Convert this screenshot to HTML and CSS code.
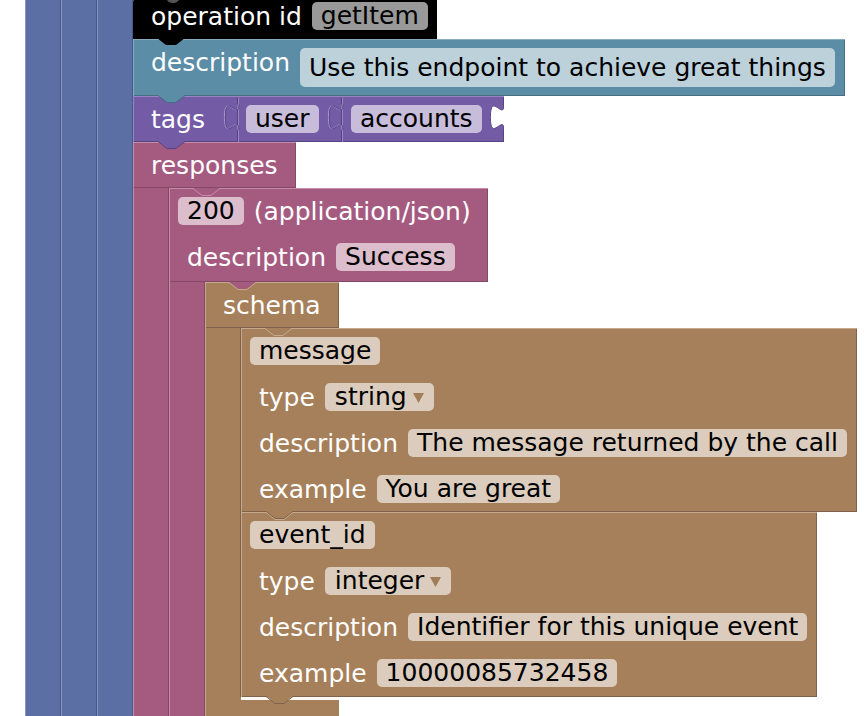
FILE: index.html
```html
<!DOCTYPE html>
<html>
<head>
<meta charset="utf-8">
<link rel="stylesheet" href="styles.css">
</head>
<body>
<div class="ws">
 <div class="cb blue"><div class="arm"></div>
  <div class="cb blue"><div class="arm"></div>
   <div class="cb blue"><div class="arm"></div>
    <div class="stack top">

     <div class="blk black line op">
      <span class="dot"></span>
      <span class="lbl">operation id</span><span class="pill">getItem</span>
      <svg class="tab" width="28" height="8" viewBox="0 0 28 8"><path class="f" d="M0 0H28L19 7H9Z"/></svg>
     </div>

     <div class="blk teal line desc">
      <span class="lbl">description</span><span class="pill tall">Use this endpoint to achieve great things</span>
      <svg class="tab" width="28" height="9" viewBox="0 0 28 9"><path class="f" d="M0 0H27L18 7H9Z"/><path class="d" d="M0 0.5L9 7.5H18L27 0.5"/></svg>
     </div>

     <div class="tagsrow">
      <div class="blk purple line tagsb">
       <span class="lbl">tags</span>
       <svg class="tab" width="28" height="9" viewBox="0 0 28 9"><path class="f" d="M0 0H27L18 7H9Z"/><path class="d" d="M0 0.5L9 7.5H18L27 0.5"/></svg>
      </div>
      <div class="blk purple line val userb">
       <svg class="puz" width="16" height="46" viewBox="0 0 16 46"><path class="pl" d="M15 8.5c0 17 -13.6 -13.6 -13.6 12.75s13.6 -4.25 13.6 12.75"/><path class="pd" d="M16 8.5c0 17 -13.6 -13.6 -13.6 12.75s13.6 -4.25 13.6 12.75"/></svg>
       <span class="pill">user</span>
      </div>
      <div class="blk purple line val acctb">
       <svg class="puz" width="16" height="46" viewBox="0 0 16 46"><path class="pl" d="M15 8.5c0 17 -13.6 -13.6 -13.6 12.75s13.6 -4.25 13.6 12.75"/><path class="pd" d="M16 8.5c0 17 -13.6 -13.6 -13.6 12.75s13.6 -4.25 13.6 12.75"/></svg>
       <span class="pill">accounts</span>
       <svg class="hole" width="16" height="46" viewBox="0 0 16 46"><path class="hw" d="M16 8.5c0 17 -13.6 -13.6 -13.6 12.75s13.6 -4.25 13.6 12.75Z"/><path class="pd" d="M16 8.5c0 17 -13.6 -13.6 -13.6 12.75s13.6 -4.25 13.6 12.75"/></svg>
      </div>
     </div>

     <div class="cblk pink responses">
      <div class="blk line head resp-head"><span class="lbl">responses</span></div>
      <div class="cb">
       <div class="arm"></div>
       <div class="stack">

        <div class="cblk pink r200">
         <div class="blk head r200-head">
          <svg class="notch" width="28" height="9" viewBox="0 0 28 9"><path class="f" d="M0 0H27L18 7H9Z"/><path class="l" d="M0 0.5L9 7.5H18L27 0.5"/></svg>
          <div class="row pf"><span class="pill">200</span><span class="lbl">(application/json)</span></div>
          <div class="row"><span class="lbl">description</span><span class="pill">Success</span></div>
         </div>
         <div class="cb">
          <div class="arm"></div>
          <div class="stack">

           <div class="cblk brown schema">
            <div class="blk line head schema-head">
             <svg class="notch" width="28" height="9" viewBox="0 0 28 9"><path class="fp" d="M0 0H27L18 7H9Z"/><path class="l" d="M0 0.5L9 7.5H18L27 0.5"/></svg>
             <span class="lbl">schema</span>
            </div>
            <div class="cb">
             <div class="arm"></div>
             <div class="stack">

              <div class="blk prop msg">
               <svg class="notch" width="28" height="9" viewBox="0 0 28 9"><path class="f" d="M0 0H27L18 7H9Z"/><path class="l" d="M0 0.5L9 7.5H18L27 0.5"/></svg>
               <div class="row pf"><span class="pill">message</span></div>
               <div class="row"><span class="lbl">type</span><span class="pill dd">string<svg class="arr" width="11" height="10" viewBox="0 0 11 10"><path d="M0 0H11L5.5 10Z"/></svg></span></div>
               <div class="row"><span class="lbl">description</span><span class="pill">The message returned by the call</span></div>
               <div class="row"><span class="lbl">example</span><span class="pill">You are great</span></div>
               <svg class="tab" width="28" height="10" viewBox="0 0 28 10"><path class="f" d="M0 0H27L18 7H9Z"/><path class="d" d="M0 0.5L9 7.5H18L27 0.5"/><path class="l" d="M0 1.5L9 8.5H18L27 1.5"/></svg>
              </div>

              <div class="blk prop evt">
               <div class="row pf"><span class="pill">event_id</span></div>
               <div class="row"><span class="lbl">type</span><span class="pill dd">integer<svg class="arr" width="11" height="10" viewBox="0 0 11 10"><path d="M0 0H11L5.5 10Z"/></svg></span></div>
               <div class="row"><span class="lbl">description</span><span class="pill">Identifier for this unique event</span></div>
               <div class="row"><span class="lbl">example</span><span class="pill">10000085732458</span></div>
               <svg class="tab" width="28" height="9" viewBox="0 0 28 9"><path class="f" d="M0 0H27L18 7H9Z"/><path class="d" d="M0 0.5L9 7.5H18L27 0.5"/></svg>
              </div>

             </div>
            </div>
            <div class="foot"></div>
           </div>

          </div>
         </div>
        </div>

       </div>
      </div>
     </div>

    </div>
   </div>
  </div>
 </div>
</div>
</body>
</html>
```

FILE: styles.css
```css
* { box-sizing: border-box; }
html, body { margin: 0; padding: 0; background: #fff; }
body {
  font-family: "DejaVu Sans", "Noto Sans", sans-serif;
  font-size: 25px;
  color: #fff;
}

.ws {
  height: 716px;
  overflow: hidden;
  padding-left: 25px;
  background: #fff;
}

/* palette */
.blue   { --c: #5b6fa5; --lt: #8797c3; --dk: #46578a; }
.black  { --c: #000000; --lt: #000000; --dk: #000000; }
.teal   { --c: #5b8da6; --lt: #86abbe; --dk: #466f84; }
.purple { --c: #745ba6; --lt: #9985c2; --dk: #574383; }
.pink   { --c: #a55b80; --lt: #c68ca9; --dk: #834864; }
.brown  { --c: #a6805b; --lt: #c6a98c; --dk: #80624a; }

/* c-shaped containers */
.cb { display: flex; align-items: stretch; }
.arm {
  width: 36px;
  flex: none;
  background: var(--c);
  box-shadow: inset 1px 0 0 var(--lt), inset -1px 0 0 var(--dk);
}
.stack { display: flex; flex-direction: column; align-items: flex-start; }
.top > :first-child { margin-top: -7px; }
.cblk { display: flex; flex-direction: column; align-items: flex-start; }

/* blocks */
.blk {
  position: relative;
  flex: none;
  background: var(--c);
  box-shadow: inset 1px 1px 0 var(--lt), inset -1px -1px 0 var(--dk);
}
.line {
  display: flex;
  align-items: center;
  height: 46px;
  padding-left: 18px;
  gap: 10px;
  white-space: nowrap;
}
.row {
  display: flex;
  align-items: center;
  height: 46px;
  padding-left: 18px;
  gap: 10px;
  white-space: nowrap;
}
.row.pf { padding-left: 9px; }

.lbl { color: #fff; }

.pill {
  display: inline-flex;
  align-items: center;
  height: 28px;
  line-height: 28px;
  padding: 0 9px;
  border-radius: 5px;
  background: rgba(255, 255, 255, 0.6);
  color: #000;
  white-space: nowrap;
}
.pill.tall { height: 39px; line-height: 39px; }
.pill.dd { padding: 0 10px 0 10px; }
.arr { margin-left: 6px; margin-top: 2px; }
.arr path { fill: #a27c58; }

/* individual blocks */
.op {
  width: 304px;
  border-top-left-radius: 10px;
  box-shadow: none;
}
.dot {
  position: absolute;
  left: 34px;
  top: 2px;
  width: 12px;
  height: 8px;
  border-radius: 50%;
  background: #555;
}
.desc { width: 712px; height: 57px; }
.desc .lbl { margin-bottom: 10px; }

.tagsrow { display: flex; }
.tagsb { width: 105px; }
.userb { width: 104px; padding-left: 8px; }
.acctb { width: 162px; padding-left: 9px; }

.resp-head { width: 163px; }
.r200-head { width: 319px; height: 94px; }
.schema-head { width: 134px; }

.prop { display: flex; flex-direction: column; align-items: flex-start; }
.msg { width: 616px; height: 184px; }
.evt { width: 576px; height: 185px; }

.foot {
  position: relative;
  width: 134px;
  height: 26px;
  background: var(--c);
  box-shadow: inset 1px 0 0 var(--lt);
}
.foot::before {
  content: "";
  position: absolute;
  left: 36px;
  right: 0;
  top: 0;
  height: 3px;
  background: #fbf8f5;
}

/* connection tabs / notches */
.tab {
  position: absolute;
  left: 25px;
  top: 100%;
  margin-top: -1px;
  z-index: 5;
  overflow: visible;
}
.op .tab { left: 24px; }
.notch {
  position: absolute;
  left: 24px;
  top: 0;
  z-index: 4;
  overflow: visible;
}
.tab .f, .notch .f { fill: var(--c); }
.tab .d { fill: none; stroke: var(--dk); stroke-width: 1; }
.tab .l, .notch .l { fill: none; stroke: var(--lt); stroke-width: 1; }
.schema-head .notch .fp { fill: #a55b80; }

/* puzzle tabs */
.puz {
  position: absolute;
  left: -15px;
  top: 0;
  z-index: 4;
  overflow: visible;
}
.puz .pl { fill: none; stroke: #a898cc; stroke-width: 1; }
.puz .pd { fill: none; stroke: #5c4889; stroke-width: 1; }
.hole {
  position: absolute;
  right: 0;
  top: 0;
  z-index: 4;
}
.hole .hw { fill: #fff; }
.hole .pd { fill: none; stroke: #5c4889; stroke-width: 1; }
```
